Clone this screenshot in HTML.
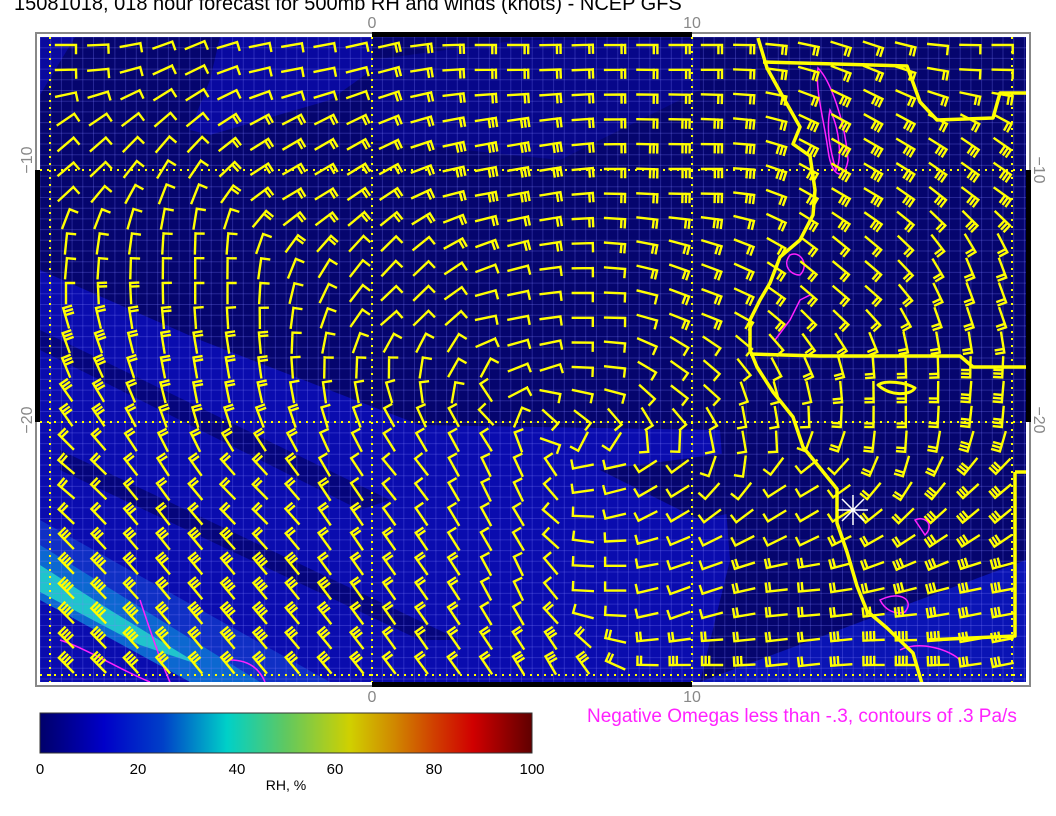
<!DOCTYPE html>
<html><head><meta charset="utf-8"><style>
html,body{margin:0;padding:0;background:#fff;width:1056px;height:816px;overflow:hidden;font-family:"Liberation Sans",sans-serif}
.t{position:absolute;white-space:nowrap}
</style></head><body>
<div class="t" style="left:14px;top:-7px;font-size:20px;color:#000">15081018, 018 hour forecast for 500mb RH and winds (knots) - NCEP GFS</div>
<svg id="m" width="1056" height="816" style="position:absolute;left:0;top:0" xmlns="http://www.w3.org/2000/svg">
<rect x="36" y="33" width="994" height="653" fill="#fff" stroke="#888" stroke-width="2"/>
<rect x="372" y="32" width="320" height="5" fill="#000"/>
<rect x="372" y="682" width="320" height="5" fill="#000"/>
<rect x="35" y="170" width="5" height="252" fill="#000"/>
<rect x="1026" y="170" width="5" height="252" fill="#000"/>
<svg x="40" y="37" width="986" height="645" viewBox="40 37 986 645" overflow="hidden">
<rect x="40" y="37" width="986" height="645" fill="#05056e"/>
<polygon points="40,37 75,37 40,95" fill="#0a0a9e"/>
<polygon points="220,37 372,37 372,70 330,100 210,135 190,130 210,80" fill="#0909a0"/>
<polygon points="372,60 520,40 700,40 700,90 560,160 372,140" fill="#07078a"/>
<polygon points="40,270 200,340 420,425 720,430 730,560 700,682 40,682" fill="#0a0cae"/>
<polygon points="700,682 1026,560 1026,682" fill="#0a14b4"/>
<polygon points="600,470 900,430 920,470 700,520" fill="#05056e"/>
<polygon points="40,330 40,350 360,510 390,500" fill="#05057c"/>
<polygon points="60,450 60,470 420,640 460,640" fill="#05057c"/>
<polygon points="40,520 40,560 260,682 330,682" fill="#1030c4"/>
<polygon points="40,545 40,600 190,682 260,682" fill="#0c68d0"/>
<polygon points="40,565 40,592 140,645 200,665 110,610" fill="#20c4cc"/>
<g id="grid" stroke="#8080ff" stroke-opacity="0.28" stroke-width="1"></g>
<g stroke="#ffff00" stroke-width="2" stroke-dasharray="2,5" fill="none">
<line x1="50" y1="37" x2="50" y2="682"/><line x1="372" y1="37" x2="372" y2="682"/><line x1="692" y1="37" x2="692" y2="682"/><line x1="1012" y1="37" x2="1012" y2="682"/>
<line x1="40" y1="170" x2="1026" y2="170"/><line x1="40" y1="422" x2="1026" y2="422"/><line x1="40" y1="675" x2="1026" y2="675"/>
</g>
<g fill="none" stroke="#ff22ff" stroke-width="1.5">
<path d="M818,68 C830,80 845,120 848,160 C845,180 832,180 828,150 C824,120 815,90 818,68Z"/>
<path d="M830,110 C840,130 842,160 836,170 C830,150 826,130 830,110Z"/>
<path d="M790,255 C800,250 810,265 800,275 C790,275 782,265 790,255Z"/>
<path d="M775,340 L790,320 L800,300 L810,295"/>
<path d="M60,640 C90,650 120,670 150,682"/>
<path d="M140,600 C150,630 160,660 170,682"/>
<path d="M230,660 C250,660 260,670 265,682"/>
<path d="M880,600 C900,590 915,600 905,612 C895,615 885,610 880,600Z"/>
<path d="M915,520 C925,515 935,525 925,535Z"/>
<path d="M900,650 C920,640 950,650 960,660"/>
</g>
<g fill="none" stroke="#ffff00" stroke-width="3.5" stroke-linejoin="round">
<path d="M758,38 L767,68 L783,97 L800,127 L793,144 L810,156 L815,190 L813,215 L800,240 L780,257 L770,283 L760,300 L750,320 L750,350 L757,367 L773,392 L793,417 L803,447 L820,468 L837,489 L837,523 L847,552 L857,586 L867,611 L887,628 L913,653 L923,687"/>
<path d="M763,62 L907,66 L920,102 L937,120 L993,118 L1000,93 L1026,93"/>
<path d="M750,354 L820,356 L960,356 L973,367 L1026,367"/>
<path d="M1015,472 L1026,472 M1015,472 L1015,636 L927,640"/>
<path d="M878,385 C885,380 905,382 915,388 C910,396 890,396 878,385Z" stroke-width="3"/>
</g>
<g id="barbs" stroke="#ffff00" stroke-width="2.4" fill="none" stroke-linecap="square"></g>
<g stroke="#fff" stroke-width="1.5"><line x1="838" y1="510" x2="868" y2="510"/><line x1="853" y1="495" x2="853" y2="525"/><line x1="842" y1="499" x2="864" y2="521"/><line x1="842" y1="521" x2="864" y2="499"/></g>
</svg>
<g font-size="16" fill="#888" font-family="Liberation Sans,sans-serif" text-anchor="middle">
<text x="372" y="28">0</text><text x="692" y="28">10</text>
<text x="372" y="702">0</text><text x="692" y="702">10</text>
<text transform="translate(32,160) rotate(-90)">−10</text>
<text transform="translate(32,420) rotate(-90)">−20</text>
<text transform="translate(1034,170) rotate(90)">−10</text>
<text transform="translate(1034,420) rotate(90)">−20</text>
</g>
<defs><linearGradient id="jet" x1="0" x2="1" y1="0" y2="0">
<stop offset="0" stop-color="#00006a"/><stop offset="0.13" stop-color="#0000c8"/><stop offset="0.25" stop-color="#0040c8"/>
<stop offset="0.38" stop-color="#00d0c8"/><stop offset="0.5" stop-color="#60c860"/><stop offset="0.63" stop-color="#d0d000"/>
<stop offset="0.72" stop-color="#d08800"/><stop offset="0.8" stop-color="#d04000"/><stop offset="0.88" stop-color="#d00000"/><stop offset="1" stop-color="#600000"/>
</linearGradient></defs>
<rect x="40" y="713" width="492" height="40" fill="url(#jet)" stroke="#333" stroke-width="1"/>
<g font-size="15" fill="#000" font-family="Liberation Sans,sans-serif" text-anchor="middle">
<text x="40" y="774">0</text><text x="138" y="774">20</text><text x="237" y="774">40</text><text x="335" y="774">60</text><text x="434" y="774">80</text><text x="532" y="774">100</text>
<text x="286" y="790" font-size="14">RH, %</text>
</g>
<text x="587" y="722" font-size="19" fill="#ff22ff" font-family="Liberation Sans,sans-serif">Negative Omegas less than -.3, contours of .3 Pa/s</text>
</svg>
<script>
(function(){
var g=document.getElementById("grid"),s="";
for(var x=40;x<1026;x+=10.7)s+='<line x1="'+x+'" y1="37" x2="'+x+'" y2="682"/>';
for(var y=37;y<682;y+=10.7)s+='<line x1="40" y1="'+y+'" x2="1026" y2="'+y+'"/>';
g.innerHTML=s;
var A=[[60,45,0,1],[300,45,10,1],[500,45,0,2],[700,45,0,2],[1000,45,0,1],
[60,170,40,1],[300,170,30,2],[500,170,10,3],[700,170,0,3],[850,170,-30,3],[1000,170,-35,3],
[60,260,85,1],[200,280,90,1],[400,320,40,1],[500,320,10,1],[600,320,0,1],[700,300,-20,2],[850,280,-40,2],[1000,290,-70,2],
[60,350,110,3],[200,360,100,2],[400,370,90,1],[450,370,60,1],[540,375,20,1],[600,380,0,1],[660,380,-30,1],[700,380,-40,1],
[60,400,125,3],[400,410,120,1],[480,410,135,1],[560,410,-45,1],[640,410,-60,1],[750,420,-80,1],[900,400,-90,2],[1000,400,-95,3],
[60,470,140,2],[250,500,135,2],[400,470,130,1],[520,470,115,1],[600,470,190,1],[660,480,210,1],[800,500,210,1],[1000,500,220,3],
[60,600,135,4],[250,600,130,4],[400,570,125,2],[520,580,115,1],[600,580,180,1],[680,600,200,1],[800,600,185,2],[1000,600,190,3],
[60,670,135,4],[300,670,130,3],[550,670,120,3],[700,670,180,3],[900,670,180,4]];
var b="";
for(var j=0;j<26;j++){for(var i=0;i<30;i++){
var px=66+i*32.3,py=45+j*24.8,sx=0,sy=0,sn=0,sw=0;
for(var k=0;k<A.length;k++){var dx=px-A[k][0],dy=py-A[k][1];var w=1/Math.pow(dx*dx+dy*dy+100,1.5);
var r=A[k][2]*Math.PI/180;sx+=w*Math.cos(r);sy+=w*Math.sin(r);sn+=w*A[k][3];sw+=w;}
var a=Math.atan2(sy,sx),n=Math.max(1,Math.round(sn/sw));
var dxv=Math.cos(a),dyv=-Math.sin(a),cx=Math.sin(a),cy=Math.cos(a);
var tx=px+10*dxv,ty=py+10*dyv;
var d="M"+(px-10*dxv).toFixed(1)+","+(py-10*dyv).toFixed(1)+"L"+tx.toFixed(1)+","+ty.toFixed(1);
for(var q=0;q<n;q++){var qx=tx-q*3.6*dxv,qy=ty-q*3.6*dyv;d+="M"+qx.toFixed(1)+","+qy.toFixed(1)+"l"+(8*cx).toFixed(1)+","+(8*cy).toFixed(1);}
b+='<path d="'+d+'"/>';
}}
document.getElementById("barbs").innerHTML=b;
})();
</script>
</body></html>
